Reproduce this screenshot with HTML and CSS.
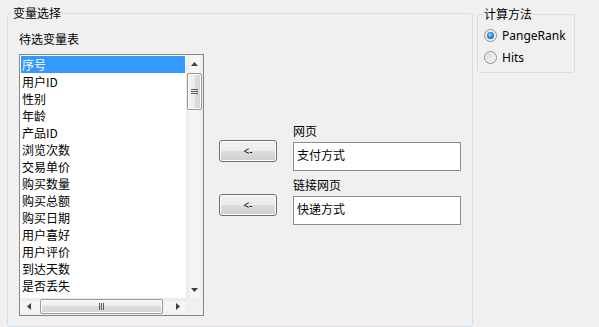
FILE: index.html
```html
<!DOCTYPE html>
<html lang="zh">
<head>
<meta charset="utf-8">
<title>变量选择</title>
<link rel="stylesheet" href="styles.css">
</head>
<body>
<div class="page">
  <fieldset class="group main">
    <legend>变量选择</legend>
    <div class="main-body">
      <div class="source">
        <div class="label">待选变量表</div>
        <div class="listbox">
          <ul class="items">
            <li class="selected">序号</li>
            <li>用户ID</li>
            <li>性别</li>
            <li>年龄</li>
            <li>产品ID</li>
            <li>浏览次数</li>
            <li>交易单价</li>
            <li>购买数量</li>
            <li>购买总额</li>
            <li>购买日期</li>
            <li>用户喜好</li>
            <li>用户评价</li>
            <li>到达天数</li>
            <li>是否丢失</li>
          </ul>
          <div class="vscroll">
            <div class="arrow"><svg width="7" height="4" viewBox="0 0 7 4"><path d="M3.5 0 L7 4 L0 4 Z" fill="#404040"/></svg></div>
            <div class="vthumb">
              <svg width="7" height="7" viewBox="0 0 7 7"><path d="M0 1.5h7M0 3.5h7M0 5.5h7" stroke="#5a5a5a" stroke-width="1"/></svg>
            </div>
            <div class="spacer"></div>
            <div class="arrow"><svg width="7" height="4" viewBox="0 0 7 4"><path d="M0 0 L7 0 L3.5 4 Z" fill="#404040"/></svg></div>
          </div>
          <div class="hscroll">
            <div class="arrow"><svg width="4" height="7" viewBox="0 0 4 7"><path d="M4 0 L4 7 L0 3.5 Z" fill="#404040"/></svg></div>
            <div class="hthumb">
              <svg width="7" height="7" viewBox="0 0 7 7"><path d="M1.5 0v7M3.5 0v7M5.5 0v7" stroke="#5a5a5a" stroke-width="1"/></svg>
            </div>
            <div class="spacer"></div>
            <div class="arrow"><svg width="4" height="7" viewBox="0 0 4 7"><path d="M0 0 L4 3.5 L0 7 Z" fill="#404040"/></svg></div>
          </div>
          <div class="corner"></div>
        </div>
      </div>
      <div class="targets">
        <div class="pair">
          <button class="btn">&lt;-</button>
          <div class="field">
            <div class="label">网页</div>
            <div class="textbox">支付方式</div>
          </div>
        </div>
        <div class="pair second">
          <button class="btn">&lt;-</button>
          <div class="field">
            <div class="label">链接网页</div>
            <div class="textbox">快递方式</div>
          </div>
        </div>
      </div>
    </div>
  </fieldset>
  <fieldset class="group method">
    <legend>计算方法</legend>
    <div class="radios">
      <div class="option"><span class="radio checked"></span><span class="opt-text">PangeRank</span></div>
      <div class="option"><span class="radio"></span><span class="opt-text">Hits</span></div>
    </div>
  </fieldset>
</div>
</body>
</html>
```
FILE: styles.css
```css
html, body {
  margin: 0;
  background: #f0f0f0;
}
body {
  font-family: "Noto Sans CJK SC", "Noto Sans", sans-serif;
  font-size: 12px;
  color: #000;
}
.page {
  display: flex;
  align-items: flex-start;
}
.group {
  box-sizing: border-box;
  border: 1px solid #d5dfe5;
  border-radius: 3px;
  padding: 0;
  min-width: 0;
}
.group legend {
  padding: 0 1px;
  line-height: 14px;
  font-size: 12px;
}
.main {
  margin: 6px 0 0 7px;
  width: 466px;
  height: 321px;
}
.main legend {
  margin-left: 4px;
}
.main-body {
  display: flex;
  align-items: flex-start;
  padding-left: 11px;
}
.label {
  line-height: 14px;
  height: 14px;
  white-space: nowrap;
}
.source {
  margin-top: 12px;
}
.listbox {
  margin-top: 8px;
  box-sizing: border-box;
  width: 185px;
  height: 262px;
  border: 1px solid #828790;
  background: #fff;
  display: grid;
  grid-template-columns: 166px 17px;
  grid-template-rows: 243px 17px;
}
.items {
  list-style: none;
  margin: 0;
  padding: 1px 1px 0 1px;
  overflow: hidden;
}
.items li {
  height: 17px;
  line-height: 17px;
  padding-left: 1px;
  white-space: nowrap;
}
.items li.selected {
  background: #3399ff;
  color: #fff;
}
.vscroll {
  display: flex;
  flex-direction: column;
  background: linear-gradient(to right, #e9e9e9, #f6f6f6 30%, #f6f6f6 70%, #ececec);
}
.hscroll {
  display: flex;
  background: linear-gradient(to bottom, #e9e9e9, #f6f6f6 30%, #f6f6f6 70%, #ececec);
}
.vscroll .arrow {
  height: 17px;
  display: flex;
  align-items: center;
  justify-content: center;
  flex: none;
}
.hscroll .arrow {
  width: 17px;
  display: flex;
  align-items: center;
  justify-content: center;
  flex: none;
}
.spacer {
  flex: 1;
}
.vthumb {
  box-sizing: border-box;
  margin: 1px 1px 0 1px;
  height: 37px;
  border: 1px solid #9a9a9a;
  border-radius: 2px;
  background: linear-gradient(to right, #f6f6f6, #ececec 50%, #dcdcdc 50%, #d6d6d6);
  box-shadow: inset 0 0 0 1px #fafafa;
  display: flex;
  align-items: center;
  justify-content: center;
}
.hthumb {
  box-sizing: border-box;
  margin: 1px 0 1px 3px;
  width: 123px;
  border: 1px solid #9a9a9a;
  border-radius: 2px;
  background: linear-gradient(to bottom, #f6f6f6, #ececec 50%, #dcdcdc 50%, #d6d6d6);
  box-shadow: inset 0 0 0 1px #fafafa;
  display: flex;
  align-items: center;
  justify-content: center;
}
.corner {
  background: #f0f0f0;
}
.targets {
  margin: 104px 0 0 15px;
  display: flex;
  flex-direction: column;
}
.pair {
  display: flex;
  align-items: flex-end;
  gap: 16px;
}
.pair.second {
  margin-top: 7px;
}
.btn {
  box-sizing: border-box;
  width: 58px;
  height: 22px;
  margin: 0 0 9px 0;
  padding: 0;
  border: 1px solid #707070;
  border-radius: 3px;
  background: linear-gradient(to bottom, #f2f2f2, #ebebeb 50%, #dddddd 50%, #cfcfcf);
  box-shadow: inset 0 0 0 1px #fbfbfb;
  font-family: "Noto Sans", sans-serif;
  font-size: 10px;
  line-height: 12px;
  color: #000;
}
.field .label {
  margin-bottom: 4px;
}
.textbox {
  box-sizing: border-box;
  width: 168px;
  height: 29px;
  border: 1px solid #8c8c8c;
  background: #fff;
  padding: 5px 3px 0;
  line-height: 14px;
}
.method {
  margin: 7px 0 0 4px;
  width: 98px;
}
.method legend {
  margin-left: 5px;
}
.radios {
  display: flex;
  flex-direction: column;
  gap: 7px;
  padding: 7px 0 7px 6px;
}
.option {
  display: flex;
  align-items: center;
  gap: 5px;
  height: 15px;
}
.radio {
  box-sizing: border-box;
  width: 13px;
  height: 13px;
  border-radius: 50%;
  border: 1px solid #8e8f8f;
  background: linear-gradient(135deg, #d4d4d4, #f8f8f8);
  box-shadow: inset 0 0 0 1px #f4f4f4;
  display: flex;
  align-items: center;
  justify-content: center;
}
.radio.checked::after {
  content: "";
  width: 7px;
  height: 7px;
  border-radius: 50%;
  background: radial-gradient(circle at 45% 40%, #a8dcff 0, #3c9ae0 35%, #0f5a9e 80%, #0c3f73 100%);
}
.opt-text {
  font-family: "Noto Sans", sans-serif;
  font-size: 12px;
  line-height: 15px;
}
```
